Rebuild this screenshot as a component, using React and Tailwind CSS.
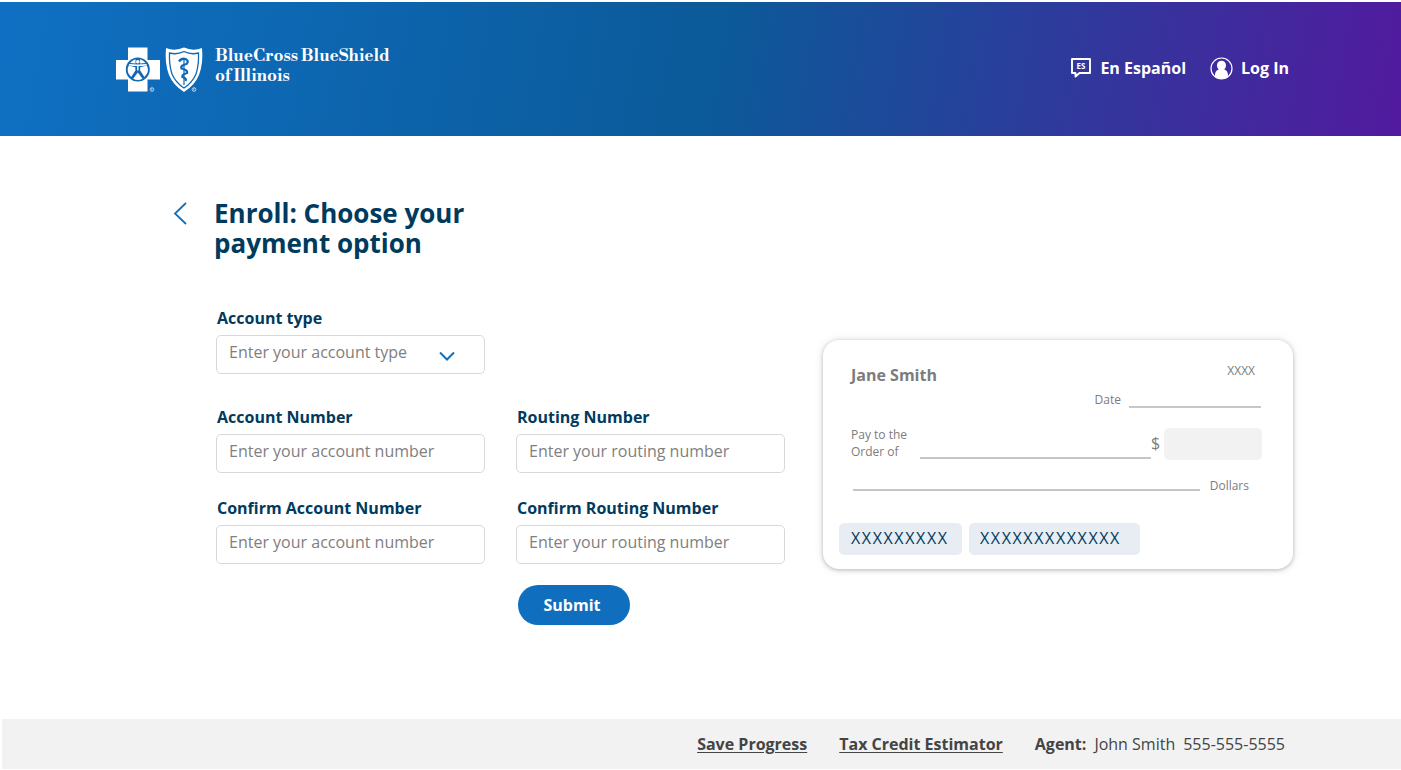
import React from 'react';

function BrandMark() {
  return (
    <svg className="h-12 w-[92px] shrink-0" viewBox="0 0 92 48" fill="none" aria-hidden="true">
      <path d="M13 1.500h19.500V14H45v19.500H32.500v12H13v-12H1V14h12z" fill="#fff" />
      <circle cx="22.800" cy="23.500" r="12" fill="#1067b4" />
      <path d="M13.700 19.500a10 10 0 0 0 2.500 11.500l4.200-6.500v-3.200z" fill="#fff" />
      <path d="M31.900 19.500a10 10 0 0 1-2.500 11.500l-4.200-6.500v-3.200z" fill="#fff" />
      <path d="M22.800 26.500l4.700 6.200a10.500 10.500 0 0 1-9.400 0z" fill="#fff" />
      <path d="M15 17a10.500 10.500 0 0 1 5.500-3.800v4.300zM30.600 17a10.500 10.500 0 0 0-5.500-3.800v4.300z" fill="#fff" />
      <circle cx="22.800" cy="15.800" r="1.800" fill="#fff" />
      <path d="M14 18.800q8.800 1 17.600 0M22.800 18.500v6" stroke="#fff" strokeWidth="1.400" />
      <path d="M51 2q9 3.500 18-.5q9 4 18 .5q1.500 15-3 27q-4 10-15 17q-11-7-15-17q-4.500-12-3-27z" fill="#fff" />
      <path d="M54.500 7q7.500 2 14.500-1.500q7 3.500 14.500 1.500q.5 12-2.500 21q-3.500 8.500-12 14q-8.500-5.500-12-14q-3-9-2.500-21z" stroke="#1067b4" strokeWidth="1.300" />
      <path d="M69 12v27" stroke="#1067b4" strokeWidth="1.200" />
      <path d="M64 15.500q2.500-3.500 6.500-2.500q4 2 1 5q-6.500 1.500-5 4.500q6.500 1.500 5.500 4.500q-5.500 1.500-4.500 4q4.500 1.500 3 4" stroke="#1067b4" strokeWidth="2.300" />
      <circle cx="37" cy="43.500" r="1.900" stroke="#fff" strokeWidth=".6" />
      <path d="M36.500 44.500v-2h.8l-.3 1l.5 1" stroke="#fff" strokeWidth=".4" />
      <circle cx="79" cy="43.500" r="1.900" stroke="#fff" strokeWidth=".6" />
      <path d="M78.500 44.500v-2h.8l-.3 1l.5 1" stroke="#fff" strokeWidth=".4" />
    </svg>
  );
}

function Field({ id, label, placeholder }) {
  return (
    <div>
      <label htmlFor={id} className="block px-px text-base leading-6 font-bold text-[#003a5d]">{label}</label>
      <input
        id={id}
        type="text"
        placeholder={placeholder}
        className="mt-[5px] block h-[39px] w-full rounded-[5px] border border-[#d8d8d8] bg-white px-3 pb-1.5 text-base text-[#737373] outline-none placeholder:text-[#808080]"
      />
    </div>
  );
}

export default function App() {
  return (
    <div className="flex min-h-screen flex-col bg-white pt-0.5 pb-px font-['Open_Sans','Noto_Sans',sans-serif]">
      <header className="flex h-[134px] items-start justify-between bg-[linear-gradient(100deg,#0f70c3_0%,#0b5a99_51%,#521a9f_100%)] pr-28 pl-[115px] text-white">
        <a href="#home" className="mt-11 flex items-start gap-2">
          <BrandMark />
          <span className="font-['Libre_Bodoni','Liberation_Serif',serif] text-[17px] leading-5 font-bold">
            <span className="block">BlueCross BlueShield</span>
            <span className="block">of Illinois</span>
          </span>
        </a>
        <nav className="mt-[54px] flex items-center gap-6 text-base leading-6 font-bold">
          <a href="#espanol" className="flex items-center gap-2">
            <svg className="size-[22px]" viewBox="0 0 22 22" fill="none" aria-hidden="true">
              <path d="M2 2h18v14H9.500L5.500 19.500V16H2z" stroke="#fff" strokeWidth="1.900" strokeLinejoin="round" />
              <text x="11" y="12" textAnchor="middle" fill="#fff" fontSize="8" fontWeight="700">ES</text>
            </svg>
            En Español
          </a>
          <a href="#login" className="flex items-center gap-2">
            <svg className="size-[23px]" viewBox="0 0 23 23" fill="none" aria-hidden="true">
              <circle cx="11.500" cy="11.500" r="10.500" stroke="#fff" strokeWidth="1.200" />
              <path d="M11.500 3.800c2.700 0 4.500 1.900 4.500 4.400c0 1.800-.7 3.200-1.700 4.200c2.200.7 3.500 2.300 3.700 5.100v2.300q-6.500 4.600-13 0v-2.300c.2-2.800 1.500-4.400 3.700-5.100c-1-1-1.700-2.400-1.700-4.200c0-2.500 1.800-4.400 4.500-4.400z" fill="#fff" />
            </svg>
            Log In
          </a>
        </nav>
      </header>

      <main className="grow pr-[108px] pl-[172px]">
        <div className="flex items-start gap-[26px] pt-[62px]">
          <button type="button" aria-label="Back" className="mt-1">
            <svg className="h-6 w-4" viewBox="0 0 16 24" fill="none" aria-hidden="true">
              <path d="M14 1L3 11.500L14 22" stroke="#1170bd" strokeWidth="1.800" />
            </svg>
          </button>
          <h1 className="w-72 text-[26px] leading-[30px] font-bold text-[#003a5d]">Enroll: Choose your payment option</h1>
        </div>

        <div className="mt-12 flex items-start justify-between pl-11">
          <form className="w-[569px]" onSubmit={(e) => e.preventDefault()}>
            <div className="w-[269px]">
              <label htmlFor="type" className="block px-px text-base leading-6 font-bold text-[#003a5d]">Account type</label>
              <div className="mt-[5px] grid items-center">
                <select id="type" className="col-start-1 row-start-1 h-[39px] w-full appearance-none rounded-[5px] border border-[#d8d8d8] bg-white px-3 pb-1.5 text-base text-[#808080]">
                  <option>Enter your account type</option>
                </select>
                <svg className="pointer-events-none col-start-1 row-start-1 mr-[29px] h-4 w-[18px] justify-self-end" viewBox="0 0 18 16" fill="none" aria-hidden="true">
                  <path d="M2 5.500l7 7l7-7" stroke="#1170bd" strokeWidth="2" />
                </svg>
              </div>
            </div>
            <div className="mt-[31px] grid grid-cols-2 gap-x-[31px] gap-y-[23px]">
              <Field id="account" label="Account Number" placeholder="Enter your account number" />
              <Field id="routing" label="Routing Number" placeholder="Enter your routing number" />
              <Field id="account2" label="Confirm Account Number" placeholder="Enter your account number" />
              <Field id="routing2" label="Confirm Routing Number" placeholder="Enter your routing number" />
              <button type="submit" className="col-start-2 -mt-0.5 ml-0.5 h-10 w-28 rounded-full bg-[#0f6fbe] pr-1 text-base font-bold text-white">Submit</button>
            </div>
          </form>

          <section className="mt-[34px] w-[470px] rounded-2xl bg-white px-4 pt-5 pb-[14px] text-xs text-[#7c7c7c] shadow-[0_1px_4px_rgba(0,0,0,0.25),0_0_12px_rgba(0,0,0,0.08)]">
            <div className="flex items-start justify-between pr-[22px] pl-3">
              <p className="pt-[3px] text-base leading-6 font-bold">Jane Smith</p>
              <p className="pt-px leading-5">XXXX</p>
            </div>
            <div className="mt-[5px] flex items-end justify-end gap-2 pr-4">
              <span className="leading-4">Date</span>
              <span className="h-0.5 w-[132px] bg-[#c6c6c6]" />
            </div>
            <div className="mt-[18px] flex items-start pr-[15px] pl-3">
              <p className="w-[69px] leading-[17px]">Pay to the<br />Order of</p>
              <span className="mt-[31px] h-0.5 grow bg-[#c6c6c6]" />
              <span className="w-[13px] text-base leading-[34px]">$</span>
              <span className="mt-0.5 h-8 w-[98px] rounded-[5px] bg-[#f2f2f2]" />
            </div>
            <div className="mt-4 flex items-center pr-7 pl-[14px]">
              <span className="mt-2 h-0.5 grow bg-[#c6c6c6]" />
              <span className="pl-[10px] leading-5">Dollars</span>
            </div>
            <div className="mt-[27px] flex gap-[7px] text-base leading-[31px] tracking-widest text-[#003a5d]">
              <span className="h-8 w-[123px] rounded-[5px] bg-[#e8edf4] pl-3">XXXXXXXXX</span>
              <span className="h-8 w-[171px] rounded-[5px] bg-[#e8edf4] pl-[11px]">XXXXXXXXXXXXX</span>
            </div>
          </section>
        </div>
      </main>

      <footer className="ml-0.5 flex h-[50px] items-center justify-end bg-[#f2f2f2] pr-[116px] text-base text-[#444]">
        <a href="#save" className="mr-8 font-bold underline underline-offset-2">Save Progress</a>
        <a href="#tax" className="mr-8 font-bold underline underline-offset-2">Tax Credit Estimator</a>
        <span className="mr-2 font-bold">Agent:</span>
        <span className="mr-2">John Smith</span>
        <span>555-555-5555</span>
      </footer>
    </div>
  );
}
